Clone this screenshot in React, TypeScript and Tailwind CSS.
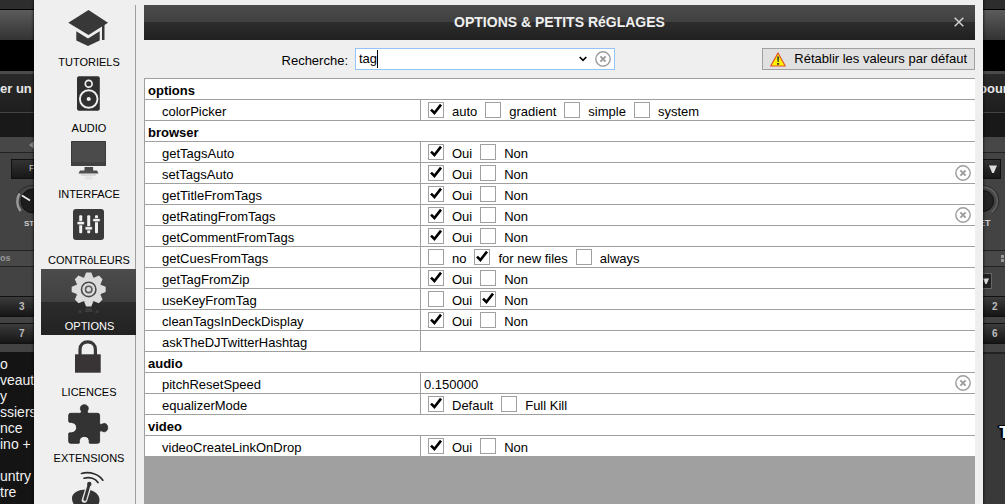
import type { ReactNode } from "react";

type Option = { label: string; on?: boolean };
type Row = {
  name: string;
  options?: Option[];
  value?: string;
  resettable?: boolean;
};
type Group = { title: string; rows: Row[] };

const yes: Option[] = [{ label: "Oui", on: true }, { label: "Non" }];
const no: Option[] = [{ label: "Oui" }, { label: "Non", on: true }];

const groups: Group[] = [
  {
    title: "options",
    rows: [
      {
        name: "colorPicker",
        options: [
          { label: "auto", on: true },
          { label: "gradient" },
          { label: "simple" },
          { label: "system" },
        ],
      },
    ],
  },
  {
    title: "browser",
    rows: [
      { name: "getTagsAuto", options: yes },
      { name: "setTagsAuto", options: yes, resettable: true },
      { name: "getTitleFromTags", options: yes },
      { name: "getRatingFromTags", options: yes, resettable: true },
      { name: "getCommentFromTags", options: yes },
      {
        name: "getCuesFromTags",
        options: [
          { label: "no" },
          { label: "for new files", on: true },
          { label: "always" },
        ],
      },
      { name: "getTagFromZip", options: yes },
      { name: "useKeyFromTag", options: no },
      { name: "cleanTagsInDeckDisplay", options: yes },
      { name: "askTheDJTwitterHashtag", value: "" },
    ],
  },
  {
    title: "audio",
    rows: [
      { name: "pitchResetSpeed", value: "0.150000", resettable: true },
      {
        name: "equalizerMode",
        options: [{ label: "Default", on: true }, { label: "Full Kill" }],
      },
    ],
  },
  {
    title: "video",
    rows: [{ name: "videoCreateLinkOnDrop", options: yes }],
  },
];

function CapIcon() {
  return (
    <g fill="#383838">
      <path d="M24.5 5 44 17.8 24.5 30 4.3 17.8Z" />
      <path d="M12.3 26.2 24 33.4 35.7 26.2V35.4L24 41 12.3 35.4Z" />
      <path d="M38 19h2.5v16H38z" />
    </g>
  );
}

function SpeakerIcon() {
  return (
    <g>
      <rect x="13" y="5.3" width="22.8" height="34.4" rx="2" fill="#303030" />
      <circle cx="24.7" cy="12.7" r="3.4" fill="none" stroke="#efefef" strokeWidth="1.7" />
      <circle cx="24.7" cy="28" r="8.8" fill="none" stroke="#efefef" strokeWidth="1.9" />
      <circle cx="24.7" cy="28" r="2.1" fill="#efefef" />
    </g>
  );
}

function MonitorIcon() {
  return (
    <g>
      <rect x="7" y="4" width="35" height="25" rx="0.5" fill="#3a3a3a" />
      <rect x="8" y="5" width="33" height="20.5" fill="#4b4b4b" />
      <rect x="7" y="26" width="35" height="3" fill="#404040" />
      <rect x="20.5" y="30" width="8.6" height="4" fill="#4a4a4a" />
      <path d="M16 33.5h17l1.5 3h-20Z" fill="#4f4f4f" />
      <path d="M16.5 37.5h16l-1 1h-14Z" fill="#c4c4c4" />
      <rect x="21" y="39.5" width="7.5" height="3" fill="#e2e2e2" />
    </g>
  );
}

function MixerIcon() {
  return (
    <g>
      <rect x="9" y="6" width="31" height="31" rx="3" fill="#3b3a3b" />
      <g fill="#f2f2f2">
        <rect x="15.2" y="12.3" width="3" height="18" rx="1" />
        <rect x="23.2" y="12.3" width="3" height="18" rx="1" />
        <rect x="31" y="12.3" width="3" height="18" rx="1" />
      </g>
      <g fill="#f2f2f2" stroke="#3b3a3b" strokeWidth="0.8">
        <rect x="13" y="18.4" width="7.4" height="3.4" rx="1" />
        <rect x="21" y="23.6" width="7.4" height="3.4" rx="1" />
        <rect x="28.8" y="15.4" width="7.4" height="3.4" rx="1" />
      </g>
    </g>
  );
}

function GearIcon() {
  return (
    <g>
      <g fill="#dcdcdc" transform="translate(24.7 20.4)">
        <circle r="13" />
        {[0, 45, 90, 135, 180, 225, 270, 315].map((angle) => (
          <path key={angle} transform={`rotate(${angle})`} d="M-4.6-12-2.6-17H2.6L4.6-12Z" />
        ))}
      </g>
      <circle cx="24.7" cy="20.4" r="7.2" fill="none" stroke="#4a4a4a" strokeWidth="1.6" />
      <circle cx="24.7" cy="20.4" r="3.2" fill="none" stroke="#5a5a5a" strokeWidth="1.6" />
      <path d="M22 39h5.5l1.5 4h-8.5ZM14 42l3-1 1 3h-3ZM35 42l-3-1-1 3h3Z" fill="#3c3c3c" />
    </g>
  );
}

function LockIcon() {
  return (
    <g>
      <path
        d="M16 20V14.5C16 9.5 19.3 6.9 23.7 6.9S31.4 9.5 31.4 14.5V20"
        fill="none"
        stroke="#383636"
        strokeWidth="3.2"
      />
      <rect x="11" y="19.3" width="25.7" height="18.4" fill="#383435" />
    </g>
  );
}

function PuzzleIcon() {
  return (
    <path
      fill="#333"
      stroke="#222"
      strokeWidth="0.8"
      d="M6.5 12.3H15.5C17 12.3 18 11.2 17 9.5C15.3 6.5 17.3 3.7 20.3 3.7S25.4 6.5 23.7 9.5C22.7 11.2 23.7 12.3 25.2 12.3H33.6Q35.6 12.3 35.6 14.3V21.5C35.6 23.2 36.8 24 38.4 23C41.3 21.3 43.7 23.5 43.7 26.6S41.3 31.9 38.4 30.2C36.8 29.3 35.6 30 35.6 31.7V40.5Q35.6 42.3 33.6 42.3H25.9C24.7 42.3 25.4 40.9 25.2 39.4C24.7 36.7 22.8 35.4 20.3 35.4S15.9 36.7 15.4 39.4C15.2 40.9 15.9 42.3 14.7 42.3H6.5Q4.7 42.3 4.7 40.5V33C4.7 31.4 6 31.9 7.5 31.8C10.7 31.4 12.6 29.5 12.6 26.6S10.7 21.9 7.5 21.5C6 21.4 4.7 21.7 4.7 20V14.3Q4.7 12.3 6.5 12.3Z"
    />
  );
}

function JoystickIcon() {
  return (
    <g>
      <g fill="none" stroke="#2c2c2c" strokeWidth="1.7" strokeLinecap="round">
        <path d="M17.5 6.5C26 4 35 7.5 38.8 13.2" />
        <path d="M20 11.2C26 9.5 31.5 11.5 34 15.5" />
      </g>
      <path
        d="M8 31C8 26 15 22.6 22 22.6S35.5 27 35.5 33 31 42 22 42 8 38 8 31Z"
        fill="#333"
      />
      <path d="M20.5 33 24 22" stroke="#e4e4e4" strokeWidth="5.6" strokeLinecap="round" />
      <path d="M20.8 32.5 25 18" stroke="#333" strokeWidth="2.8" strokeLinecap="round" />
      <circle cx="25.3" cy="17" r="2.2" fill="#333" />
    </g>
  );
}

const sections: { label: string; icon: ReactNode; current?: boolean }[] = [
  { label: "TUTORIELS", icon: <CapIcon /> },
  { label: "AUDIO", icon: <SpeakerIcon /> },
  { label: "INTERFACE", icon: <MonitorIcon /> },
  { label: "CONTRôLEURS", icon: <MixerIcon /> },
  { label: "OPTIONS", icon: <GearIcon />, current: true },
  { label: "LICENCES", icon: <LockIcon /> },
  { label: "EXTENSIONS", icon: <PuzzleIcon /> },
  { label: "", icon: <JoystickIcon /> },
];

function Sidebar() {
  return (
    <nav className="mt-[5px] flex w-[102px] shrink-0 flex-col pl-[7px]">
      {sections.map(({ label, icon, current }, index) => (
        <button
          key={index}
          type="button"
          aria-label={label || "Section"}
          className={
            current
              ? "flex h-[66px] shrink-0 flex-col items-center bg-[linear-gradient(#4c4c4c,#404040_50%,#2c2c2c_50%,#222)] text-white"
              : "flex h-[66px] shrink-0 flex-col items-center border-r border-[#a0a0a0] text-black"
          }
        >
          <svg width="49" height="48" viewBox="0 0 49 48" aria-hidden="true" className="shrink-0">
            {icon}
          </svg>
          <span className="mt-0.5 pl-0.5 text-[11px] leading-[14px]">{label}</span>
        </button>
      ))}
    </nav>
  );
}

function ClearIcon() {
  return (
    <svg width="16" height="16" viewBox="0 0 16 16" fill="none" stroke="#9c9c9c" aria-hidden="true">
      <circle cx="8" cy="8" r="7.2" strokeWidth="1.4" />
      <path d="M5.4 5.4 10.6 10.6M10.6 5.4 5.4 10.6" strokeWidth="2" />
    </svg>
  );
}

function Choice({ label, on }: Option) {
  return (
    <label className="flex items-center gap-2">
      <span className="relative flex">
        <input
          type="checkbox"
          defaultChecked={on}
          className="peer size-4 appearance-none border border-[#a0a0a0] bg-white"
        />
        <svg
          viewBox="0 0 16 16"
          aria-hidden="true"
          className="pointer-events-none absolute inset-0 size-4 opacity-0 peer-checked:opacity-100"
        >
          <path d="M3 7.6 6.4 11 13 2.6" fill="none" stroke="#000" strokeWidth="2.6" />
        </svg>
      </span>
      <span className="pt-[3px] leading-4">{label}</span>
    </label>
  );
}

function SettingRow({ row }: { row: Row }) {
  return (
    <tr>
      <th scope="row" className="border-t border-l border-[#a0a0a0] p-0 text-left font-normal">
        <div className="h-5 pt-1 pl-[17px] leading-4">{row.name}</div>
      </th>
      <td className="border-t border-l border-[#a0a0a0] p-0">
        <div className="flex h-5 items-center justify-between pr-1">
          {row.options ? (
            <div className="flex gap-2 pl-[7px]">
              {row.options.map((option) => (
                <Choice key={option.label} {...option} />
              ))}
            </div>
          ) : (
            <input
              type="text"
              aria-label={row.name}
              defaultValue={row.value}
              className="h-5 min-w-0 flex-1 pt-[3px] pl-[3px] outline-none"
            />
          )}
          {row.resettable && (
            <button type="button" aria-label={`Réinitialiser ${row.name}`}>
              <ClearIcon />
            </button>
          )}
        </div>
      </td>
    </tr>
  );
}

function SettingsTable() {
  return (
    <table className="w-full table-fixed border-separate border-spacing-0 bg-white">
      <colgroup>
        <col className="w-[276px]" />
        <col />
      </colgroup>
      {groups.map((group) => (
        <tbody key={group.title}>
          <tr>
            <th
              scope="rowgroup"
              colSpan={2}
              className="border-t border-l border-[#a0a0a0] p-0 text-left font-bold"
            >
              <div className="h-5 pt-1 pl-[3px] leading-4">{group.title}</div>
            </th>
          </tr>
          {group.rows.map((row) => (
            <SettingRow key={row.name} row={row} />
          ))}
        </tbody>
      ))}
    </table>
  );
}

function Toolbar() {
  return (
    <div className="flex h-[38px] shrink-0 items-center">
      <label htmlFor="search" className="w-[211px] pt-1 pr-[7px] text-right">
        Recherche:
      </label>
      <div className="flex h-[22px] w-[260px] items-center border border-[#92c5f5] bg-white pr-[3px] pl-[3px]">
        <input
          id="search"
          type="text"
          defaultValue="tag"
          className="field-sizing-content leading-4 caret-transparent outline-none"
        />
        <span className="h-[18px] w-px bg-black" />
        <button type="button" aria-label="Historique" className="ml-auto">
          <svg width="8" height="6" viewBox="0 0 8 6" aria-hidden="true">
            <path d="M.7 1 4 4.4 7.3 1" fill="none" stroke="#000" strokeWidth="1.7" />
          </svg>
        </button>
        <button type="button" aria-label="Effacer" className="ml-2">
          <ClearIcon />
        </button>
      </div>
      <button
        type="button"
        className="ml-auto flex h-[22px] items-center gap-2 border border-[#a0a0a0] bg-[#e1e1e1] px-[7px]"
      >
        <svg width="16" height="15" viewBox="0 0 16 15" aria-hidden="true">
          <path d="M8 1 15.3 14H.7Z" fill="#fff200" stroke="#e2502f" strokeWidth="1.2" strokeLinejoin="round" />
          <path d="M7 4.5h2.2L8.7 10H7.5Z" fill="#4a4a2a" />
          <rect x="7" y="11" width="2.2" height="1.8" fill="#4a4a2a" />
        </svg>
        Rétablir les valeurs par défaut
      </button>
    </div>
  );
}

function Dialog() {
  return (
    <main className="z-10 flex min-w-0 flex-1 bg-[#efefef] pr-2 text-[13px] text-black shadow-[0_0_3px_#000]">
      <Sidebar />
      <section className="ml-2 flex min-w-0 flex-1 flex-col pt-[5px]">
        <header className="grid h-[35px] shrink-0 grid-cols-[1fr_auto_1fr] items-center bg-[linear-gradient(#4c4c4c,#404040_49%,#2d2d2d_49%,#202020)] text-[#f0f0f0]">
          <h1 className="col-start-2 pb-0.5 text-[14px] leading-4 font-bold">
            OPTIONS &amp; PETITS RéGLAGES
          </h1>
          <button type="button" aria-label="Fermer" className="mr-[11px] justify-self-end pb-0.5">
            <svg width="10" height="10" viewBox="0 0 10 10" aria-hidden="true">
              <path d="M.7.7 9.3 9.3M9.3.7.7 9.3" stroke="#d0d0d0" strokeWidth="1.5" />
            </svg>
          </button>
        </header>
        <Toolbar />
        <div className="flex-1 overflow-hidden bg-[#a0a0a0]">
          <SettingsTable />
        </div>
      </section>
    </main>
  );
}

function Pad({ children, className }: { children: ReactNode; className: string }) {
  return (
    <div
      className={`flex h-[21px] shrink-0 items-center border border-x-0 border-[#111] bg-linear-to-b from-[#3c3c3c] to-[#161616] text-[10px] font-bold text-[#bbb] ${className}`}
    >
      {children}
    </div>
  );
}

function DeckTop({ children, marker }: { children: ReactNode; marker?: ReactNode }) {
  return (
    <>
      <div className="h-[9px] shrink-0 bg-[#2d2d2d]" />
      <div className="h-8 shrink-0 border-y border-black bg-linear-to-b from-[#5c5c5c] to-[#333]" />
      <div className="h-[30px] shrink-0 bg-black" />
      <div className="h-[3px] shrink-0 bg-[#4b4b4b]" />
      <div className="flex h-[38px] shrink-0 items-center bg-linear-to-b from-[#2a2a2a] to-[#1e1e1e] pb-2 text-[13px] font-bold text-[#e6e6e6]">
        {children}
      </div>
      <div className="h-[25px] shrink-0 border-t border-[#444] bg-[#191919]" />
      <div className="flex h-4 shrink-0 items-center justify-end border-b border-[#222] bg-[#474747]">
        {marker}
      </div>
    </>
  );
}

function LeftDeck() {
  return (
    <aside className="flex w-[34px] shrink-0 flex-col overflow-hidden bg-[#434343] whitespace-nowrap">
      <DeckTop
        marker={
          <svg width="5" height="8" viewBox="0 0 5 8" aria-hidden="true">
            <path d="M0 4 5 0V8Z" fill="#8a8a8a" />
          </svg>
        }
      >
        er un
      </DeckTop>
      <div className="mt-[6px] ml-[11px] flex h-5 shrink-0 items-center border border-[#111] bg-linear-to-b from-[#333] to-[#181818] pl-[17px] text-[9px] text-[#ccc]">
        F
      </div>
      <svg width="34" height="34" viewBox="0 0 34 34" aria-hidden="true" className="mt-1 shrink-0">
        <path d="M17 12A17 17 0 0 1 34 2.5" fill="none" stroke="#2a2a2a" />
        <path d="M19.5 10.5A16 16 0 0 0 20.5 28" fill="none" stroke="#999" strokeWidth="2.6" />
        <circle cx="33" cy="18" r="12" fill="#1d1d1d" stroke="#111" />
        <path d="M22 12.5 30 17.5" stroke="#eee" strokeWidth="1.6" />
      </svg>
      <div className="pl-6 text-[8px] leading-[13px] font-bold text-[#ccc]">ST</div>
      <div className="mt-5 flex h-[17px] shrink-0 items-center border-y border-[#222] bg-[#484848] text-[9px] font-bold text-[#999]">
        os
      </div>
      <Pad className="mt-[29px] pl-[19px]">3</Pad>
      <Pad className="mt-[6px] pl-[19px]">7</Pad>
      <ul className="mt-2 flex-1 bg-[#141414] pt-1 text-[14px] leading-4 text-[#f0f0f0]">
        <li>o</li>
        <li>veauté</li>
        <li>y</li>
        <li>ssiers</li>
        <li>nce</li>
        <li>ino +</li>
        <li className="h-4" />
        <li>untry</li>
        <li>tre</li>
      </ul>
    </aside>
  );
}

function Triangle({ size }: { size: number }) {
  return (
    <svg width={size} height={size} viewBox="0 0 8 8" aria-hidden="true">
      <path d="M0 .5h8L4.8 8H3.2Z" fill="#ddd" />
    </svg>
  );
}

function RightDeck() {
  return (
    <aside className="flex w-[22px] shrink-0 flex-col overflow-hidden bg-[#434343] whitespace-nowrap">
      <DeckTop>
        <span className="-ml-1">pour</span>
      </DeckTop>
      <div className="mt-[6px] mr-1 flex h-5 shrink-0 items-center border border-l-0 border-[#111] bg-linear-to-b from-[#333] to-[#181818] pl-[6px]">
        <Triangle size={8} />
      </div>
      <svg width="22" height="34" viewBox="0 0 22 34" aria-hidden="true" className="mt-1 shrink-0">
        <path d="M8.5 29.5A14 14 0 0 0 0 4" fill="none" stroke="#5c5c5c" strokeWidth="2.4" />
        <path d="M9.5 30.5A15.5 15.5 0 0 0 0 2.5" fill="none" stroke="#2a2a2a" />
        <circle cx="0" cy="18" r="10.5" fill="#222" stroke="#111" />
      </svg>
      <div className="-ml-1 text-[9px] leading-[13px] font-bold text-[#ccc]">ET</div>
      <div className="mt-5 flex h-[17px] shrink-0 items-center justify-end border-y border-[#222] bg-[#484848]">
        <svg width="4" height="8" viewBox="0 0 4 8" aria-hidden="true">
          <path d="M0 0h3v3H0zM0 4h3v3H0z" fill="#999" />
        </svg>
      </div>
      <div className="mt-[6px] mr-[13px] flex h-4 shrink-0 items-center border border-l-0 border-[#666] bg-[#222]">
        <Triangle size={6} />
      </div>
      <Pad className="mt-[7px] pl-[9px]">2</Pad>
      <Pad className="mt-[6px] pl-[9px]">6</Pad>
      <div className="mt-[1px] h-[7px] shrink-0" />
      <div className="flex flex-1 items-start justify-end overflow-hidden border-t-2 border-[#222] bg-[#393939] pt-[67px]">
        <span className="-mr-1 text-[16px] font-bold text-white [text-shadow:-1px_-1px_0_#000,1px_1px_0_#000,-2px_0_1px_#000,0_2px_1px_#000]">
          T
        </span>
      </div>
    </aside>
  );
}

export default function App() {
  return (
    <div className="flex h-screen overflow-hidden bg-[#434343] font-['Liberation_Sans',Arial,sans-serif]">
      <LeftDeck />
      <Dialog />
      <RightDeck />
    </div>
  );
}
